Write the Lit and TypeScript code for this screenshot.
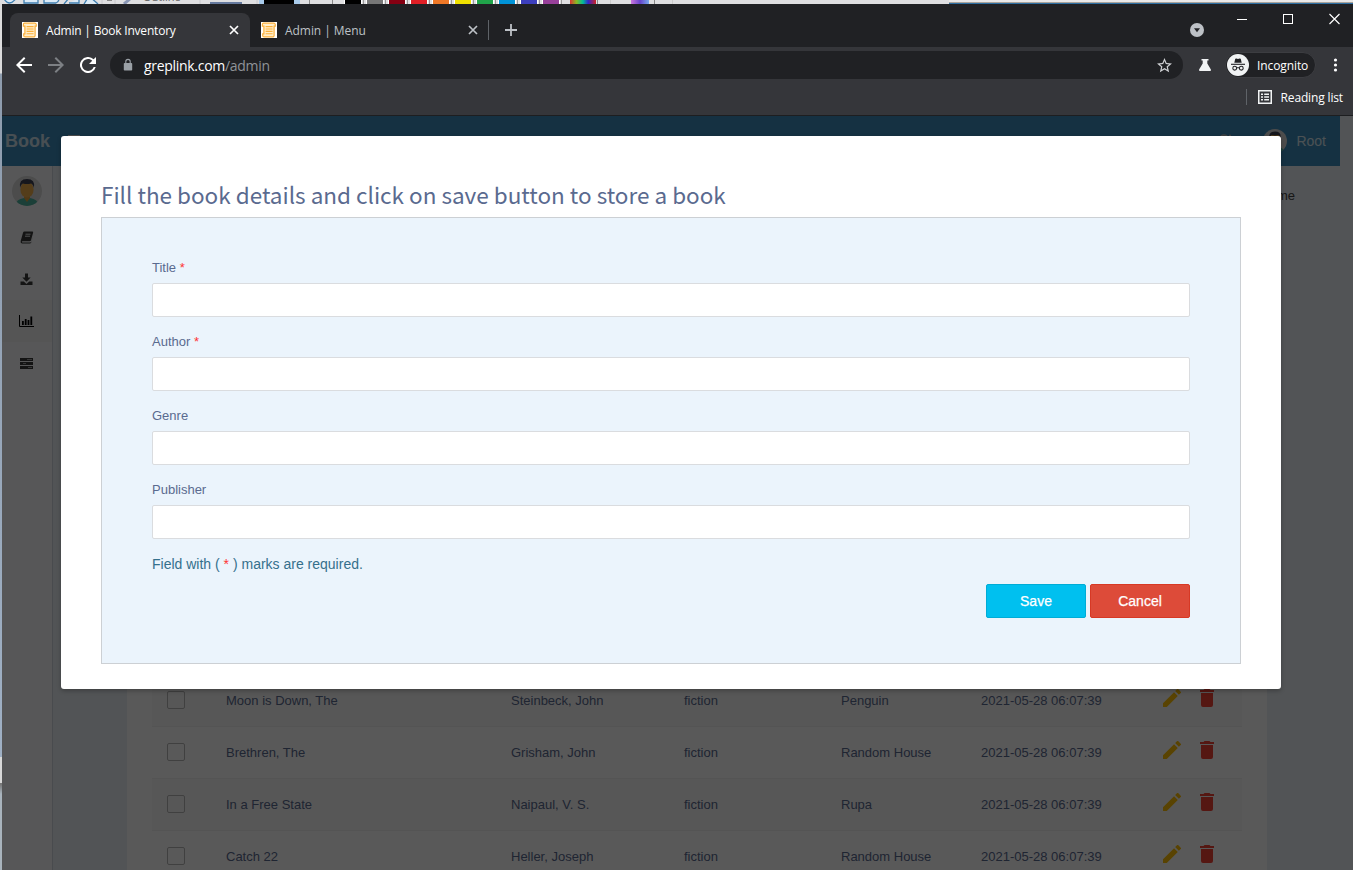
import { LitElement, html, svg, css } from "lit";
import { customElement, property } from "lit/decorators.js";

const SWATCHES: [number, string][] = [
  [345, "#000"], [367, "#777"], [389, "#850012"], [411, "#e01f26"], [433, "#ef7827"], [455, "#efe000"],
  [477, "#20a44a"], [499, "#0093d8"], [521, "#3c3fbd"], [543, "#97409a"],
];

const BOOKS = [
  ["Moon is Down, The", "Steinbeck, John", "fiction", "Penguin", "2021-05-28 06:07:39"],
  ["Brethren, The", "Grisham, John", "fiction", "Random House", "2021-05-28 06:07:39"],
  ["In a Free State", "Naipaul, V. S.", "fiction", "Rupa", "2021-05-28 06:07:39"],
  ["Catch 22", "Heller, Joseph", "fiction", "Random House", "2021-05-28 06:07:39"],
];

const closeIcon = html`<svg width="10" height="10" viewBox="0 0 10 10"><path d="M1 1l8 8M9 1l-8 8" stroke="currentColor" stroke-width="1.7"/></svg>`;

const favicon = html`<svg width="16" height="16" viewBox="0 0 16 16"><rect width="16" height="16" fill="#fff"/><path d="M2.5 1.2h10.2a1.6 1.6 0 0 1 1.6 1.6v1.4h-1.2v9.3a1.4 1.4 0 0 1-1.4 1.4H3.2a1.5 1.5 0 0 1-1.5-1.5v-1.5h1.2V4.2H1.4V2.6q0-1.4 1.1-1.4z" fill="#ffeecb" stroke="#fbb03b" stroke-width="1.2"/><path d="M4.6 4.6h7M4.6 7h7M4.6 9.4h7M4.6 11.8h7" stroke="#fbb03b" stroke-width="1.1"/></svg>`;

const avatar = (size: number) => html`<svg width=${size} height=${size} viewBox="0 0 30 30"><defs><clipPath id="c"><circle cx="15" cy="15" r="15"/></clipPath></defs><g clip-path="url(#c)"><rect width="30" height="30" fill="#d9d9d9"/><path d="M3 30q1-7 9-8h6q8 1 9 8z" fill="#4db6a0"/><path d="M12 18h6v4l-3 4-3-4z" fill="#e5a03e"/><ellipse cx="15" cy="13.5" rx="6.6" ry="8" fill="#f0ae4c"/><path d="M8 12Q6.500 3 15 3t7 9q-1-4-3-4.500-4 1-8 0-2 .5-3 4.500z" fill="#3f4254"/></g></svg>`;

@customElement("browser-chrome")
export class BrowserChrome extends LitElement {
  static styles = css`
    :host { display: block; font-family: "Open Sans", "Noto Sans", sans-serif; font-size: 12px; color: #fff; }
    svg { display: block; flex: none; }
    .strip { height: 43px; background: #202124; display: flex; align-items: flex-end; }
    .tab { height: 34px; box-sizing: border-box; display: flex; align-items: center; padding: 0 11px 0 12px; gap: 8px; width: 240px; color: #bdc1c6; }
    .tab.active { background: #35363a; border-radius: 8px 8px 0 0; color: #fff; margin-left: 8px; }
    .tab.second { width: 238px; padding-right: 10px; padding-left: 11px; }
    .name { flex: 1; white-space: nowrap; }
    .n1 { letter-spacing: -0.2px; }
    .n2 { letter-spacing: -0.05px; }
    .rule { width: 1px; height: 20px; background: #5f6368; margin-bottom: 7px; }
    .plus { margin: 0 0 11px 16px; }
    .chev { margin: 0 0 10px auto; }
    .controls { display: flex; align-self: flex-start; padding: 9px 13px 0 33px; gap: 36px; }
    .bar { height: 36px; background: #35363a; display: flex; align-items: center; }
    .nav { display: flex; gap: 16px; padding-left: 14px; }
    .omni { width: 1073px; height: 28px; border-radius: 14px; background: #202124; margin-left: 14px; box-sizing: border-box; padding: 0 11px 0 13px; display: flex; align-items: center; }
    .url { flex: 1; font-size: 14px; margin-left: 11px; letter-spacing: -0.3px; color: #8f9398; }
    .url b { font-weight: 400; color: #fff; }
    .flask { margin-left: 15px; }
    .incog { display: flex; align-items: center; gap: 8px; width: 91px; height: 26px; border-radius: 14px; background: #202124; border: 1px solid #3c3d41; box-sizing: border-box; margin-left: 13px; padding-left: 1px; letter-spacing: -0.1px; white-space: nowrap; }
    .dots { margin-left: 17px; }
    .marks { height: 32px; background: #35363a; border-bottom: 1px solid #1d1e20; display: flex; align-items: center; justify-content: flex-end; padding-right: 10px; box-sizing: border-box; height: 33px; padding-bottom: 4px; letter-spacing: -0.15px; }
    .sep { width: 1px; height: 16px; background: #5f6368; margin-right: 11px; }
    .read { margin-right: 9px; }
  `;
  render() {
    return html`
      <div class="strip">
        <div class="tab active">${favicon}<span class="name n1">Admin | Book Inventory</span>${closeIcon}</div>
        <div class="tab second">${favicon}<span class="name n2">Admin | Menu</span>${closeIcon}</div>
        <div class="rule"></div>
        <svg class="plus" width="12" height="12" viewBox="0 0 12 12"><path d="M6 0v12M0 6h12" stroke="#bdc1c6" stroke-width="1.8"/></svg>
        <svg class="chev" width="14" height="14" viewBox="0 0 14 14"><circle cx="7" cy="7" r="7" fill="#bdc1c6"/><path d="M4 5.300h6L7 9.300z" fill="#202124"/></svg>
        <div class="controls">
          <svg width="10" height="12"><path d="M0 6.500h10" stroke="#fff"/></svg>
          <svg width="10" height="12"><rect x=".5" y="1.500" width="9" height="9" fill="none" stroke="#fff"/></svg>
          <svg width="11" height="12"><path d="M.5 1l10 10M10.500 1l-10 10" stroke="#fff" stroke-width="1.150"/></svg>
        </div>
      </div>
      <div class="bar">
        <div class="nav">
          <svg width="16" height="16" viewBox="4 4 16 16"><path d="M20 11H7.800l5.600-5.600L12 4l-8 8 8 8 1.400-1.400L7.800 13H20z" fill="#fff"/></svg>
          <svg width="16" height="16" viewBox="4 4 16 16"><path d="M4 11h12.200l-5.600-5.600L12 4l8 8-8 8-1.400-1.400 5.600-5.600H4z" fill="#7d8084"/></svg>
          <svg width="16" height="16" viewBox="4 4 16 16"><path d="M17.650 6.350A8 8 0 1 0 19.730 14h-2.080A6 6 0 1 1 12 6c1.660 0 3.140.69 4.220 1.780L13 11h7V4z" fill="#fff"/></svg>
        </div>
        <div class="omni">
          <svg width="10" height="14" viewBox="0 0 10 14"><rect x=".8" y="5" width="8.400" height="7.500" rx=".8" fill="#9aa0a6"/><path d="M2.800 5.500V3.600a2.200 2.200 0 0 1 4.400 0v1.900" fill="none" stroke="#9aa0a6" stroke-width="1.100"/></svg>
          <span class="url"><b>greplink.com</b>/admin</span>
          <svg width="15" height="15" viewBox="2 2 20 20"><path d="M22 9.240l-7.190-.62L12 2 9.190 8.630 2 9.240l5.460 4.730L5.820 21 12 17.270 18.180 21l-1.630-7.030L22 9.240zM12 15.400l-3.760 2.270 1-4.280-3.320-2.880 4.380-.38L12 6.100l1.710 4.040 4.380.38-3.320 2.880 1 4.280L12 15.400z" fill="#d0d2d5"/></svg>
        </div>
        <svg class="flask" width="14" height="14" viewBox="0 0 14 14"><path d="M3.500 1h7v1.500H9.300v3l3.600 6q.5 1.500-1 1.500H2.100q-1.500 0-1-1.500l3.600-6v-3H3.500z" fill="#f1f3f4"/></svg>
        <div class="incog">
          <svg width="22" height="22" viewBox="0 0 22 22"><circle cx="11" cy="11" r="11" fill="#f1f3f4"/><path d="M7.300 8.800L8.200 5q.3-.8 1.200-.5l1.600.4 1.600-.4q.9-.3 1.200.5l.9 3.800z" fill="#202124"/><path d="M4 10.300h14" stroke="#202124" stroke-width="1.100"/><circle cx="7.700" cy="14.200" r="1.900" fill="none" stroke="#202124" stroke-width="1.100"/><circle cx="14.300" cy="14.200" r="1.900" fill="none" stroke="#202124" stroke-width="1.100"/><path d="M9.600 14q1.400-.8 2.800 0" fill="none" stroke="#202124"/></svg>
          <span>Incognito</span>
        </div>
        <svg class="dots" width="5" height="14"><circle cx="2.500" cy="2" r="1.600" fill="#fff"/><circle cx="2.500" cy="7" r="1.600" fill="#fff"/><circle cx="2.500" cy="12" r="1.600" fill="#fff"/></svg>
      </div>
      <div class="marks">
        <span class="sep"></span>
        <svg class="read" width="14" height="14" viewBox="0 0 14 14"><rect x=".75" y=".75" width="12.500" height="12.500" fill="none" stroke="#f1f3f4" stroke-width="1.500"/><path d="M3 4.200h2M6.200 4.200H11M3 7h2M6.200 7H11M3 9.800h2M6.200 9.800H11" stroke="#f1f3f4" stroke-width="1.500"/></svg>
        <span>Reading list</span>
      </div>`;
  }
}

@customElement("book-field")
export class BookField extends LitElement {
  @property() label = "";
  @property({ type: Boolean }) required = false;
  static styles = css`
    :host { display: block; height: 74px; }
    label { display: block; height: 26px; line-height: 22px; box-sizing: border-box; font-size: 13px; color: #5a6a8f; padding-bottom: 4px; }
    em { font-style: normal; color: #f33; }
    input { display: block; width: 100%; height: 34px; box-sizing: border-box; border: 1px solid #dadcdf; border-radius: 2px; background: #fff; outline: none; }
  `;
  render() {
    return html`<label>${this.label} ${this.required ? html`<em>*</em>` : ""}</label><input />`;
  }
}

@customElement("admin-page")
export class AdminPage extends LitElement {
  static styles = css`
    :host { display: block; position: relative; height: 754px; overflow: hidden; background: #ecf0f5; font-family: "Liberation Sans", Arial, sans-serif; font-size: 13px; color: #5a6a8f; }
    svg { display: block; }
    header { height: 50px; width: 1338px; background: #3c8dbc; color: #fff; display: flex; align-items: center; box-sizing: border-box; padding: 0 14px 0 3px; }
    .brand { font-size: 18px; font-weight: 700; opacity: .75; }
    .burger { margin-left: 17px; flex: 1; }
    .root { font-size: 14px; margin-left: 9px; opacity: .8; }
    .bell { margin-right: 30px; }
    .below { display: grid; grid-template-columns: 51px 1fr; height: 704px; }
    aside { background: #f9fafc; border-right: 1px solid #d2d6de; box-sizing: border-box; display: flex; flex-direction: column; padding-top: 10px; }
    .face { padding-left: 10px; height: 40px; }
    .item { height: 42px; display: flex; align-items: center; justify-content: center; color: #3a3a3a; padding-right: 1px; }
    .item.on { background: #f2f2f4; color: #000; }
    .crumb { height: 61px; box-sizing: border-box; padding: 22px 58px 0 0; text-align: right; color: #444; }
    .box { margin: 0 86px 0 74px; background: #fff; height: 700px; padding: 448px 25px 0; box-sizing: border-box; }
    .row { display: grid; grid-template-columns: 74px 285px 173px 157px 140px 182px 36px 1fr; height: 52px; box-sizing: border-box; border-bottom: 1px solid #f0f0f0; align-items: center; white-space: nowrap; }
    .row:nth-child(odd) { background: #f9f9f9; }
    .check { width: 18px; height: 18px; box-sizing: border-box; border: 1px solid #b8b8b8; border-radius: 2px; margin-left: 15px; margin-bottom: 2px; }
    .act { margin-bottom: 6px; }
    .shade { position: absolute; inset: 0; background: rgba(0, 0, 0, .65); }
    .modal { position: absolute; left: 59px; top: 20px; width: 1220px; height: 553px; box-sizing: border-box; padding: 40px 40px 0; background: #fff; border-radius: 3px; box-shadow: 0 2px 4px rgba(0, 0, 0, .25); }
    h2 { margin: 0; height: 41px; line-height: 36px; font: 400 22.500px/36px "Noto Sans CJK SC", sans-serif; color: #5a6a8f; white-space: nowrap; }
    .panel { height: 447px; box-sizing: border-box; border: 1px solid #ccd0d4; background: #ebf4fc; padding: 39px 50px 0; }
    .hint { font-size: 14px; line-height: 20px; color: #35708c; padding-top: 1px; }
    .hint em { font-style: normal; color: #f33; }
    .buttons { display: flex; justify-content: flex-end; gap: 4px; padding-top: 10px; }
    button { width: 100px; height: 34px; border: 1px solid #00acd6; border-radius: 2px; background: #00c0ef; color: #fff; font: 14px "Liberation Sans", Arial, sans-serif; padding: 0; -webkit-text-stroke: .25px #fff; }
    .cancel { background: #dd4b39; border-color: #d73925; }
  `;
  render() {
    return html`
      <header>
        <span class="brand">Book</span>
        <svg class="burger" width="14" height="14" viewBox="0 0 14 14" preserveAspectRatio="xMinYMid"><path d="M1 2h12M1 7h12M1 12h12" stroke="#ddd" stroke-width="2"/></svg>
        <svg class="bell" width="14" height="14" viewBox="0 0 14 14"><path d="M2 14V3q0-2 3-2t3 2M10 1.500h2" fill="none" stroke="#bbb" stroke-width="1.500"/></svg>
        ${avatar(24)}<span class="root">Root</span>
      </header>
      <div class="below">
        <aside>
          <div class="face">${avatar(30)}</div>
          <div class="item"><svg width="14" height="14" viewBox="0 0 14 14"><path d="M4.500 1.500h7.800q1.200 0 .8 1.200L11 10.200q-.3 1-1.300 1H2.300q-.9.8 0 1.300h7.900q.8 0 1.100-.8L13.600 4l-2.400 8.500q-.3 1-1.400 1H2Q.2 13.200.7 11L3 2.700q.3-1.200 1.500-1.200zM5.300 4.200h5M4.800 6.200h5" fill="currentColor"/><path d="M5.500 4.200h5M5 6.200h5" stroke="#f9fafc" stroke-width=".9"/></svg></div>
          <div class="item"><svg width="13" height="13" viewBox="0 0 13 13"><path d="M5 .5h3v4h2.700L6.500 8.700 2.300 4.500H5zM.5 8.500h3.300L6.500 11l2.700-2.500h3.300V12H.5z" fill="currentColor"/></svg></div>
          <div class="item on"><svg width="15" height="12" viewBox="0 0 15 12"><path d="M.5 0v11.500H15" fill="none" stroke="currentColor"/><path d="M3 6h1.800v4H3zM5.800 4h1.800v6H5.800zM8.600 5h1.800v5H8.600zM11.400 1.500h1.800V10h-1.800z" fill="currentColor"/></svg></div>
          <div class="item"><svg width="13" height="11" viewBox="0 0 13 11"><path d="M0 0h13v3H0zM0 4h13v3H0zM0 8h13v3H0z" fill="currentColor"/><path d="M7 1.500h5M3 5.500h3M8 9.500h4" stroke="#aaa" stroke-width=".9"/></svg></div>
        </aside>
        <main>
          <div class="crumb">Home</div>
          <div class="box"><div class="rows">
            ${BOOKS.map((b) => html`<div class="row">
              <span class="check"></span>${b.map((v) => html`<span>${v}</span>`)}
              <svg class="act" width="18" height="18" viewBox="3 3 18 18"><path d="M3 17.250V21h3.750L17.810 9.940l-3.750-3.750L3 17.250zM20.710 7.040a1 1 0 0 0 0-1.410l-2.340-2.340a1 1 0 0 0-1.410 0l-1.830 1.830 3.750 3.750 1.830-1.830z" fill="#ffc107"/></svg>
              <svg class="act" width="16" height="18" viewBox="4 3 16 18"><path d="M6 19a2 2 0 0 0 2 2h8a2 2 0 0 0 2-2V7H6v12zM19 4h-3.500l-1-1h-5l-1 1H5v2h14V4z" fill="#f44336"/></svg>
            </div>`)}
          </div></div>
        </main>
      </div>
      <div class="shade"></div>
      <section class="modal">
        <h2>Fill the book details and click on save button to store a book</h2>
        <div class="panel">
          <book-field label="Title" required></book-field>
          <book-field label="Author" required></book-field>
          <book-field label="Genre"></book-field>
          <book-field label="Publisher"></book-field>
          <div class="hint">Field with ( <em>*</em> ) marks are required.</div>
          <div class="buttons"><button>Save</button><button class="cancel">Cancel</button></div>
        </div>
      </section>`;
  }
}

@customElement("app-root")
export class AppRoot extends LitElement {
  static styles = css`
    :host { display: block; width: 1353px; height: 870px; overflow: hidden; background: #202124; }
    .desk { display: block; }
    .cols { display: grid; grid-template-columns: 2px 1351px; height: 866px; }
    .edge { background: linear-gradient(#dcdcdc 0 69px, #8e9cad 70px, #9fb0c4 753px, #d8d8d8 753px 779px, #777 779px 780px, #a9b4bd 790px); border-right: 0; }
  `;
  render() {
    return html`
      <svg class="desk" width="1353" height="4" viewBox="0 0 1353 4">
        <defs>
          <linearGradient id="rb"><stop stop-color="#d33"/><stop offset=".25" stop-color="#8b2"/><stop offset=".5" stop-color="#0b9"/><stop offset=".7" stop-color="#32c"/><stop offset="1" stop-color="#c22"/></linearGradient>
          <linearGradient id="vi"><stop stop-color="#c7d"/><stop offset=".5" stop-color="#64c"/><stop offset="1" stop-color="#7ae"/></linearGradient>
        </defs>
        <rect width="1353" height="4" fill="#dfdfe1"/>
        <g stroke="#3f7fb0" stroke-width="1.300" fill="#dcebf7">
          <path d="M3-3q6 12 14 0M24-2v5h14v-5M44-2v5h12q3-1 3-5M64 4l5-6M69 3h10v-5M84 4l5-8 9 8" />
        </g>
        <path d="M102 0v4M115 0v4M200 0v4M257 0v4" stroke="#c8c8cc"/>
        <rect x="107" width="5" height="1" fill="#888"/>
        <path d="M124 4l7-6" stroke="#8a97b5" stroke-width="3"/>
        <text x="143" y="1" font-size="11" font-family="Open Sans, sans-serif" fill="#666">Outline</text>
        <rect x="210" y="2" width="32" height="2" fill="#667a9e"/>
        <rect x="259" width="41" height="4" fill="#a9cbeb"/><rect x="264" width="30" height="4" fill="#000"/>
        <path d="M309.500 0v4M332.500 0v4" stroke="#888"/>
        ${SWATCHES.map(([x, c]) => svg`<rect x=${x - 1} width="18" height="4" fill="#fff"/><rect x=${x} width="16" height="4" fill=${c}/><path d=${`M${x + 18.5} 0v4`} stroke="#999"/>`)}
        <rect x="570" width="26" height="4" fill="url(#rb)"/>
        <rect x="631" width="18" height="4" fill="url(#vi)"/>
        <path d="M597.500 0v4M654.500 0v4" stroke="#888"/><path d="M672.500 0v4M610.500 0v4" stroke="#ccc"/>
        <rect x="949" width="404" height="2" fill="#ebe9e8"/><rect x="949" y="2" width="404" height="1" fill="#a8a39c"/><rect x="949" y="3" width="404" height="1" fill="#2d6fa3"/>
      </svg>
      <div class="cols">
        <div class="edge"></div>
        <div><browser-chrome></browser-chrome><admin-page></admin-page></div>
      </div>`;
  }
}
